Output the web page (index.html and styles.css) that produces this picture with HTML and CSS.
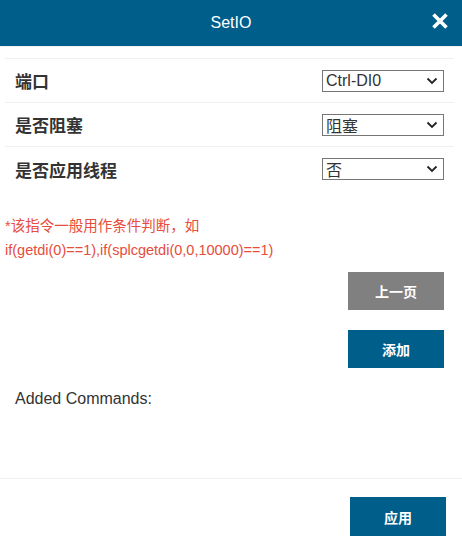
FILE: index.html
```html
<!DOCTYPE html>
<html>
<head>
<meta charset="utf-8">
<link rel="stylesheet" href="styles.css">
</head>
<body>
<div class="dialog">
  <header class="header">
    <span class="title">SetIO</span>
    <span class="close">
      <svg width="18" height="18" viewBox="0 0 18 18"><path d="M2.5 2.5 L15.5 15.5 M15.5 2.5 L2.5 15.5" stroke="#fff" stroke-width="3.6" stroke-linecap="butt"/></svg>
    </span>
  </header>
  <div class="strip"></div>
  <div class="body">
    <div class="form">
      <div class="row">
        <label class="label">端口</label>
        <div class="select"><span>Ctrl-DI0</span><svg class="chev" width="12" height="8" viewBox="0 0 12 8"><path d="M1.5 1.5 L6 6 L10.5 1.5" fill="none" stroke="#222" stroke-width="1.8"/></svg></div>
      </div>
      <div class="row">
        <label class="label">是否阻塞</label>
        <div class="select"><span>阻塞</span><svg class="chev" width="12" height="8" viewBox="0 0 12 8"><path d="M1.5 1.5 L6 6 L10.5 1.5" fill="none" stroke="#222" stroke-width="1.8"/></svg></div>
      </div>
      <div class="row">
        <label class="label">是否应用线程</label>
        <div class="select"><span>否</span><svg class="chev" width="12" height="8" viewBox="0 0 12 8"><path d="M1.5 1.5 L6 6 L10.5 1.5" fill="none" stroke="#222" stroke-width="1.8"/></svg></div>
      </div>
    </div>
    <p class="note">*该指令一般用作条件判断，如<br>if(getdi(0)==1),if(splcgetdi(0,0,10000)==1)</p>
    <div class="actions">
      <button class="btn btn-gray">上一页</button>
      <button class="btn btn-blue">添加</button>
    </div>
    <div class="added">Added Commands:</div>
  </div>
  <footer class="footer">
    <button class="btn btn-blue btn-apply">应用</button>
  </footer>
</div>
</body>
</html>
```
FILE: styles.css
```css
* { box-sizing: border-box; }
html, body { margin: 0; padding: 0; background: #fff; }
body {
  font-family: "Liberation Sans", Arial, "Noto Sans CJK SC", sans-serif;
  color: #333;
  width: 462px;
  height: 546px;
  overflow: hidden;
}
.dialog { display: flex; flex-direction: column; height: 546px; }
.header {
  height: 46px;
  background: #005e8a;
  display: flex;
  align-items: center;
  justify-content: center;
  position: relative;
}
.title { color: #fff; font-size: 16px; }
.close {
  position: absolute;
  right: 13px;
  top: 12px;
  width: 18px;
  height: 18px;
  display: flex;
}
.strip { height: 1px; background: #f0f0f0; }
.body { padding: 11px 8px 0 5px; flex: 1; }
.form { border-top: 1px solid #f0f0f0; }
.row {
  height: 44px;
  display: flex;
  align-items: center;
  justify-content: space-between;
  border-bottom: 1px solid #f0f0f0;
  padding: 0 10px 0 10px;
}
.row:last-child { border-bottom: none; }
.label {
  font-size: 17px;
  font-weight: bold;
  color: #333;
  font-family: "Liberation Sans", "Noto Sans CJK SC", sans-serif;
}
.select {
  width: 122px;
  height: 22px;
  border: 1px solid #767676;
  display: flex;
  align-items: center;
  justify-content: space-between;
  padding: 0 4px 0 3px;
  font-size: 16px;
  color: #333;
  font-family: "Liberation Sans", "Noto Sans CJK SC", sans-serif;
}
.chev { margin-right: 1px; }
.note {
  margin: 23px 0 0 0;
  color: #e74c3c;
  font-size: 14.5px;
  line-height: 24px;
  font-family: "Liberation Sans", "Noto Sans CJK SC", sans-serif;
}
.actions {
  display: flex;
  flex-direction: column;
  align-items: flex-end;
  gap: 20px;
  margin-top: 10px;
  padding-right: 10px;
}
.btn {
  width: 96px;
  height: 38px;
  border: none;
  color: #fff;
  font-size: 14px;
  font-weight: bold;
  font-family: "Noto Sans CJK SC", sans-serif;
  padding: 0;
}
.btn-gray { background: #808080; }
.btn-blue { background: #005e8a; }
.added {
  margin-top: 22px;
  padding-left: 10px;
  font-size: 16px;
  color: #333;
}
.footer {
  border-top: 1px solid #f0f0f0;
  height: 68px;
  display: flex;
  justify-content: flex-end;
  align-items: flex-start;
  padding: 18px 16px 0 0;
}
.btn-apply { height: 39px; }
```
